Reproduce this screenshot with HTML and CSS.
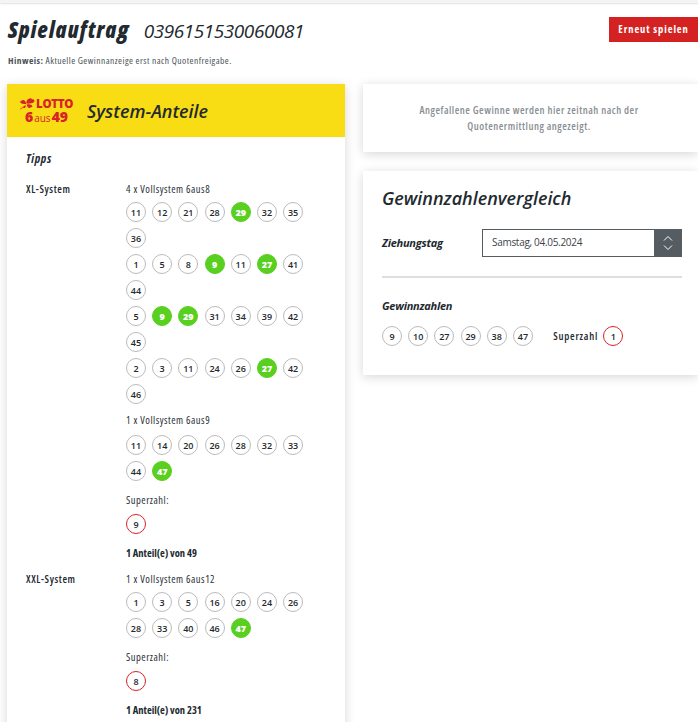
FILE: index.html
```html
<!DOCTYPE html>
<html lang="de">
<head>
<meta charset="utf-8">
<title>Spielauftrag</title>
<link rel="stylesheet" href="styles.css">
</head>
<body>
<div class="topbar"></div>
<header class="head">
  <div class="head-text">
    <h1 class="title"><span class="title-main">Spielauftrag</span><span class="title-num">0396151530060081</span></h1>
    <p class="hint"><b>Hinweis:</b> Aktuelle Gewinnanzeige erst nach Quotenfreigabe.</p>
  </div>
  <a class="btn">Erneut spielen</a>
</header>
<main class="cols">
  <section class="card left">
    <div class="banner">
      <div class="logo">
        <div class="logo-top">
          <svg class="clover" viewBox="0 0 18 14" width="18" height="14"><path d="M8 6.500C7 3.500 9 .8 11.500.3c1.500-.3 2.500.5 3 1.200 1.500-.3 3 .7 2.800 2.200C17 6 12 6.800 8 6.500zM7.500 7C5 7.200 1.500 6.500.5 5.500c-.8-1 .2-2.300 1.500-2.300C3 1.800 5 2 6 3.500 7 4.600 7.400 5.800 7.500 7zM8 7.400c2.500-.2 5.500.3 6.500 1.500.8 1-.2 2-1.500 2-.6 1.300-2.600 1.300-3.600.1C8.600 10 8.200 8.700 8 7.400zM7.500 7.500C6 9 3.500 11.500.3 13.600l-.3-.6c2.500-2 5-3.900 7.500-5.500zM6.800 8.500c.3 1 .1 2.500-.8 3.100-1 .6-2.400.1-2.700-.7z"/></svg>
          <span class="logo-lotto">LOTTO</span>
        </div>
        <div class="logo-bottom"><span class="logo-big">6</span><span class="logo-aus">aus</span><span class="logo-big">49</span></div>
      </div>
      <h2 class="banner-title">System-Anteile</h2>
    </div>
    <div class="card-body">
      <h3 class="tipps">Tipps</h3>
      <div class="sys">
        <div class="sys-name">XL-System</div>
        <div class="sys-data">
          <p class="label">4 x Vollsystem 6aus8</p>
          <div class="balls"><span class="ball">11</span><span class="ball">12</span><span class="ball">21</span><span class="ball">28</span><span class="ball hit">29</span><span class="ball">32</span><span class="ball">35</span><span class="ball">36</span></div>
          <div class="balls"><span class="ball">1</span><span class="ball">5</span><span class="ball">8</span><span class="ball hit">9</span><span class="ball">11</span><span class="ball hit">27</span><span class="ball">41</span><span class="ball">44</span></div>
          <div class="balls"><span class="ball">5</span><span class="ball hit">9</span><span class="ball hit">29</span><span class="ball">31</span><span class="ball">34</span><span class="ball">39</span><span class="ball">42</span><span class="ball">45</span></div>
          <div class="balls"><span class="ball">2</span><span class="ball">3</span><span class="ball">11</span><span class="ball">24</span><span class="ball">26</span><span class="ball hit">27</span><span class="ball">42</span><span class="ball">46</span></div>
          <p class="label label-next">1 x Vollsystem 6aus9</p>
          <div class="balls balls-next"><span class="ball">11</span><span class="ball">14</span><span class="ball">20</span><span class="ball">26</span><span class="ball">28</span><span class="ball">32</span><span class="ball">33</span><span class="ball">44</span><span class="ball hit">47</span></div>
          <p class="label label-super">Superzahl:</p>
          <div class="balls"><span class="ball super">9</span></div>
          <p class="share">1 Anteil(e) von 49</p>
        </div>
      </div>
      <div class="sys">
        <div class="sys-name">XXL-System</div>
        <div class="sys-data">
          <p class="label">1 x Vollsystem 6aus12</p>
          <div class="balls"><span class="ball">1</span><span class="ball">3</span><span class="ball">5</span><span class="ball">16</span><span class="ball">20</span><span class="ball">24</span><span class="ball">26</span><span class="ball">28</span><span class="ball">33</span><span class="ball">40</span><span class="ball">46</span><span class="ball hit">47</span></div>
          <p class="label label-super">Superzahl:</p>
          <div class="balls"><span class="ball super">8</span></div>
          <p class="share">1 Anteil(e) von 231</p>
        </div>
      </div>
    </div>
  </section>
  <aside class="right">
    <section class="card notice">Angefallene Gewinne werden hier zeitnah nach der<br>Quotenermittlung angezeigt.</section>
    <section class="card compare">
      <h2 class="compare-title">Gewinnzahlenvergleich</h2>
      <div class="day-row">
        <span class="em-label">Ziehungstag</span>
        <div class="select">
          <span class="select-value">Samstag, 04.05.2024</span>
          <span class="select-btn"><svg viewBox="0 0 10 18" width="10" height="18"><path d="M1 6.500 5 2.500l4 4M1 11.500l4 4 4-4" fill="none" stroke="#fff" stroke-width="1"/></svg></span>
        </div>
      </div>
      <hr class="rule">
      <h3 class="em-label win-label">Gewinnzahlen</h3>
      <div class="win-row">
        <span class="ball">9</span><span class="ball">10</span><span class="ball">27</span><span class="ball">29</span><span class="ball">38</span><span class="ball">47</span>
        <span class="super-text">Superzahl</span><span class="ball super">1</span>
      </div>
    </section>
  </aside>
</main>
</body>
</html>
```

FILE: styles.css
```css
* { box-sizing: border-box; }
html, body { margin: 0; padding: 0; height: 722px; overflow: hidden; background: #fff; }
body { font-family: "Open Sans", "Lato", sans-serif; font-stretch: 75%; color: #22292f; font-size: 10px; }
.topbar { height: 3px; background: #f4f4f4; box-shadow: 0 1px 2px rgba(0,0,0,.12); }
.head { display: flex; justify-content: space-between; align-items: flex-start; padding: 14px 8px 0 8px; height: 81px; }
.head-text { margin-top: -2px; }
.title { margin: 0; display: flex; align-items: baseline; gap: 14px; font-style: italic; line-height: 28px; }
.title-main { font-size: 22px; font-weight: 800; letter-spacing: 1.250px; }
.title-num { font-size: 19px; font-weight: 500; font-stretch: 90%; letter-spacing: -.45px; }
.hint { margin: 10px 0 0; font-size: 9.500px; line-height: 12px; color: #4b5257; letter-spacing: .45px; }
.btn { display: block; margin: 0 -8px 0 0; height: 25px; width: 89px; background: #d42222; color: #fff; font-weight: 700; font-size: 10.500px; line-height: 25px; text-align: center; letter-spacing: .9px; }
.cols { display: flex; align-items: flex-start; padding-left: 7px; gap: 18px; }
.card { background: #fff; box-shadow: 0 2px 10px rgba(0,0,0,.16); }
.left { width: 338px; flex: none; height: 800px; }
.banner { height: 53px; background: #f8dc14; display: flex; align-items: center; padding-left: 13px; gap: 14px; }
.logo { width: 53px; color: #d8232a; font-weight: 800; font-stretch: 100%; }
.logo-top { display: flex; align-items: center; height: 12px; gap: 1px; }
.clover { fill: #d8232a; flex: none; width: 15px; height: 12px; }
.logo-lotto { font-size: 11.500px; line-height: 12px; letter-spacing: -.3px; }
.logo-bottom { display: flex; align-items: baseline; justify-content: center; height: 14px; line-height: 14px; }
.logo-big { font-size: 14px; }
.logo-aus { font-size: 10px; font-weight: 400; margin: 0 1px; }
.banner-title { margin: 0; font-size: 18px; font-style: italic; font-weight: 600; font-stretch: 90%; }
.card-body { padding: 0 0 0 19px; }
.tipps { margin: 0; padding-top: 15px; height: 46px; font-size: 12px; line-height: 13px; font-style: italic; font-weight: 700; letter-spacing: .7px; }
.sys { display: flex; }
.sys-name { width: 100px; flex: none; font-size: 10.500px; line-height: 12px; font-weight: 600; letter-spacing: .6px; }
.sys-data { flex: none; width: 184px; }
.label { margin: 0; height: 13px; font-size: 10.500px; line-height: 12px; color: #2a3138; letter-spacing: .5px; }
.balls { display: flex; flex-wrap: wrap; gap: 6px 6.200px; margin-top: 6px; }
.balls + .balls { margin-top: 6px; }
.label-next { margin-top: 10px; }
.balls-next { margin-top: 8px; }
.label-super { margin-top: 13px; }
.label-super + .balls { margin-top: 7px; }
.ball { width: 20px; height: 20px; flex: none; border-radius: 50%; border: 1.200px solid #bbb; display: flex; align-items: center; justify-content: center; font-size: 9px; font-weight: 600; color: #22292f; background: #fff; font-stretch: 90%; }
.hit { background: #59cf1f; border-color: #59cf1f; color: #fff; font-weight: 800; }
.super { border-color: #d8232a; }
.share { margin: 13px 0 0; height: 26px; font-size: 10.500px; line-height: 12px; font-weight: 700; }
.right { flex: 1; display: flex; flex-direction: column; gap: 19px; }
.notice { height: 68px; padding-top: 18px; padding-right: 3px; text-align: center; font-size: 10.500px; line-height: 16px; font-weight: 600; color: #8a8f94; letter-spacing: .5px; }
.compare { height: 204px; padding: 16px 16px 0 19px; }
.compare-title { margin: 0; font-size: 18px; line-height: 22px; font-style: italic; font-weight: 600; font-stretch: 90%; }
.day-row { display: flex; align-items: center; margin-top: 20px; }
.em-label { width: 100px; flex: none; font-size: 11px; font-style: italic; font-weight: 700; color: #22292f; margin: 0; line-height: 14px; font-stretch: 88%; letter-spacing: -.25px; }
.select { width: 200px; height: 28px; border: 1px solid #555c62; display: flex; justify-content: space-between; align-items: stretch; }
.select-value { font-size: 10px; line-height: 24px; padding-left: 9px; color: #3c4349; font-weight: 500; font-stretch: 90%; letter-spacing: -.3px; }
.select-btn { width: 27px; background: #555c62; display: flex; align-items: center; justify-content: center; }
.rule { margin: 19px 0 0; height: 2px; border: 0; background: #dedede; width: 300px; }
.win-label { width: auto; margin-top: 21px; }
.win-row { display: flex; align-items: center; gap: 6.200px; margin-top: 13px; }
.super-text { font-size: 10.500px; font-weight: 600; margin-left: 14px; margin-right: -1px; letter-spacing: .8px; }
```
